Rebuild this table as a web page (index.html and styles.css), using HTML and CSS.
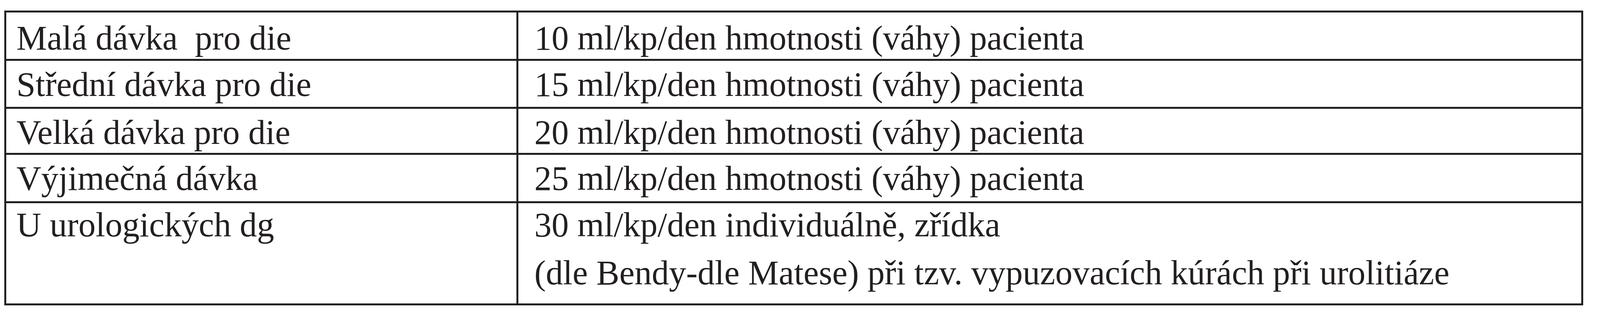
FILE: index.html
```html
<!DOCTYPE html>
<html lang="cs">
<head>
<meta charset="utf-8">
<title>Dávkování</title>
<link rel="stylesheet" href="styles.css">
</head>
<body>
<div class="table">
  <div class="cell c1 r1">Malá dávka&nbsp; pro die</div>
  <div class="cell c2 r1">10 ml/kp/den hmotnosti (váhy) pacienta</div>
  <div class="cell c1">Střední dávka pro die</div>
  <div class="cell c2">15 ml/kp/den hmotnosti (váhy) pacienta</div>
  <div class="cell c1">Velká dávka pro die</div>
  <div class="cell c2">20 ml/kp/den hmotnosti (váhy) pacienta</div>
  <div class="cell c1">Výjimečná dávka</div>
  <div class="cell c2">25 ml/kp/den hmotnosti (váhy) pacienta</div>
  <div class="cell c1 r5">U urologických dg</div>
  <div class="cell c2 r5">
    <div class="line">30 ml/kp/den individuálně, zřídka</div>
    <div class="line next">(dle Bendy-dle Matese) při tzv. vypuzovacích kúrách při urolitiáze</div>
  </div>
</div>
</body>
</html>
```

FILE: styles.css
```css
html, body {
  margin: 0;
  padding: 0;
  background: #ffffff;
}

.table {
  display: grid;
  grid-template-columns: 1665fr 3469fr;
  grid-template-rows: 119px 118px 113px 119px 257px;
  gap: 5px;
  padding: 5px;
  width: calc(100% - 54px);
  box-sizing: border-box;
  margin: 27px 0 0 11px;
  background: #231f20;
}

.cell {
  min-width: 0;
  background: #ffffff;
  color: #231f20;
  font-family: "Liberation Serif", "Times New Roman", serif;
  font-size: 88px;
  line-height: 112px;
  white-space: nowrap;
  padding-top: 5px;
  box-sizing: border-box;
}

.c1 {
  padding-left: 26px;
}

.c2 {
  padding-left: 41px;
}

.r1 {
  padding-top: 10px;
}

.r5 {
  padding-top: 0;
}

.line.next {
  margin-top: 11px;
}
```
